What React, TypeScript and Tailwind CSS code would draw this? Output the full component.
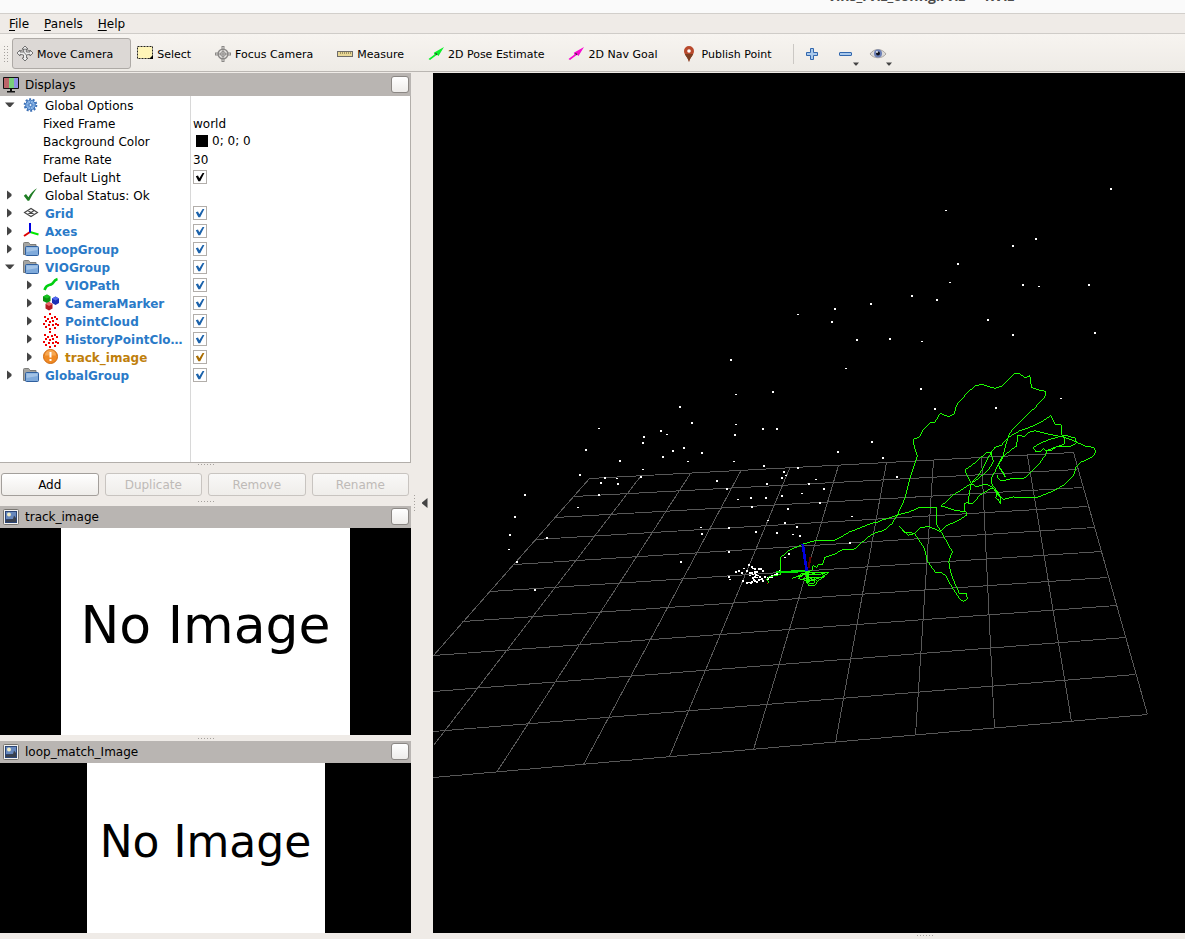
import { useState, type ReactNode } from 'react';

type IconName =
  | 'options' | 'ok' | 'grid' | 'axes' | 'folder' | 'path' | 'marker' | 'cloud' | 'warning';

interface TreeItem {
  id: string;
  label: string;
  icon?: IconName;
  child?: boolean;
  open?: boolean;
  tone?: 'plain' | 'display' | 'warning';
  value?: string;
  color?: boolean;
  check?: boolean;
}

const items: TreeItem[] = [
  { id: 'options', label: 'Global Options', icon: 'options', open: true },
  { id: 'frame', label: 'Fixed Frame', value: 'world' },
  { id: 'background', label: 'Background Color', value: '0; 0; 0', color: true },
  { id: 'rate', label: 'Frame Rate', value: '30' },
  { id: 'light', label: 'Default Light', check: true },
  { id: 'status', label: 'Global Status: Ok', icon: 'ok' },
  { id: 'grid', label: 'Grid', icon: 'grid', tone: 'display', check: true },
  { id: 'axes', label: 'Axes', icon: 'axes', tone: 'display', check: true },
  { id: 'loop', label: 'LoopGroup', icon: 'folder', tone: 'display', check: true },
  { id: 'vio', label: 'VIOGroup', icon: 'folder', open: true, tone: 'display', check: true },
  { id: 'viopath', label: 'VIOPath', icon: 'path', child: true, tone: 'display', check: true },
  { id: 'marker', label: 'CameraMarker', icon: 'marker', child: true, tone: 'display', check: true },
  { id: 'cloud', label: 'PointCloud', icon: 'cloud', child: true, tone: 'display', check: true },
  { id: 'history', label: 'HistoryPointClo…', icon: 'cloud', child: true, tone: 'display', check: true },
  { id: 'track', label: 'track_image', icon: 'warning', child: true, tone: 'warning', check: true },
  { id: 'global', label: 'GlobalGroup', icon: 'folder', tone: 'display', check: true },
];

const toneClass = {
  plain: 'text-black',
  display: 'font-bold text-[#2a7ac8]',
  warning: 'font-bold text-[#c07f0c]',
};

const checkColor = { plain: '#000000', display: '#1b62ab', warning: '#a86c00' };

function Icon({ children }: { children: ReactNode }) {
  return (
    <svg viewBox="0 0 16 16" className="w-4 h-4 shrink-0 overflow-visible" aria-hidden="true">
      {children}
    </svg>
  );
}

const cloudDots = [
  [6, 0], [1, 3], [11, 3], [4, 5], [8, 4], [13, 5], [2, 7], [6, 8], [9, 7],
  [0, 10], [12, 10], [5, 11], [9, 11], [2, 13], [14, 11], [6, 15], [11, 14],
];

function TreeIcon({ name }: { name: IconName }) {
  switch (name) {
    case 'options':
      return (
        <Icon>
          <circle cx="7.5" cy="8" r="5.8" fill="none" stroke="#3b6fb5" strokeWidth="2" strokeDasharray="2 1.6" />
          <circle cx="7.5" cy="8" r="4.8" fill="#8fb8e8" stroke="#3f76bd" />
          <path d="M7.5 4v8M3.5 8h8M4.7 5.2l5.6 5.6M10.3 5.2l-5.6 5.6" stroke="#4a80c4" strokeWidth=".7" />
          <circle cx="7.5" cy="8" r="1.6" fill="#e4effb" stroke="#3f76bd" />
        </Icon>
      );
    case 'ok':
      return (
        <Icon>
          <path d="M.8 8.8 3 7 5.4 10.2C7.5 6.5 10.2 3.4 14 1.2 10.8 5 8.4 9 6.2 13.8H4.6Z" fill="#1f7d24" />
        </Icon>
      );
    case 'grid':
      return (
        <Icon>
          <path d="M1.5 7.5 8 3.5 14.5 7.5 8 11.5ZM4.7 5.5 11.2 9.5M11.2 5.5 4.7 9.5" fill="none" stroke="#444" strokeWidth="1.1" />
        </Icon>
      );
    case 'axes':
      return (
        <Icon>
          <path d="M7 9 1 13" stroke="#e00000" strokeWidth="2" />
          <path d="M7 9 15.5 11.5" stroke="#00e800" strokeWidth="2" />
          <path d="M7 9.5V0" stroke="#0000e0" strokeWidth="2" />
        </Icon>
      );
    case 'folder':
      return (
        <Icon>
          <path d="M.5 13.5V2.5Q.5 1.5 1.5 1.5H5.5Q6 1.5 6.5 2.5L7 3.5H13V13.5Z" fill="#a5a5a2" stroke="#7d7d7a" />
          <rect x="2.5" y="5.5" width="13" height="9" rx="1" fill="#7faadb" stroke="#2f5f9e" />
          <path d="M3.5 6.5H14.5V9L3.5 11Z" fill="#a3c3e6" />
        </Icon>
      );
    case 'path':
      return (
        <Icon>
          <path d="M1.5 13C4 6 6 9.5 9.5 6.5 11.5 3.5 12.5 2.5 14.5 2" fill="none" stroke="#00cf10" strokeWidth="2.6" />
        </Icon>
      );
    case 'marker':
      return (
        <Icon>
          <path d="M0 1.5 4 -.5 7.5 1.5V6L4 8 0 6Z" fill="#0c9312" />
          <path d="M0 1.5 4 -.5 7.5 1.5 4 3.5Z" fill="#18c520" />
          <path d="M9 3.5 12.5 1.5 16 3.5V8L12.5 10 9 8Z" fill="#1c2fb4" />
          <path d="M9 3.5 12.5 1.5 16 3.5 12.5 5.5Z" fill="#5068ee" />
          <path d="M2.5 9 6 7 9.5 9V13.5L6 15.5 2.5 13.5Z" fill="#b41c22" />
          <path d="M2.5 9 6 7 9.5 9 6 11Z" fill="#ec686c" />
        </Icon>
      );
    case 'cloud':
      return (
        <Icon>
          {cloudDots.map(([x, y]) => (
            <rect key={`${x}-${y}`} x={x} y={y} width="2" height="2" fill="#f00000" />
          ))}
        </Icon>
      );
    case 'warning':
      return (
        <Icon>
          <circle cx="7.5" cy="7.5" r="7" fill="#f08a24" stroke="#cf6a10" />
          <path d="M2 6.5A5.5 5.5 0 0 1 13 6.5Z" fill="#f7a853" />
          <path d="M7.5 3V8.5M7.5 10V12" stroke="#fff" strokeWidth="2" />
        </Icon>
      );
  }
}

function Arrow({ open }: { open?: boolean }) {
  return (
    <svg viewBox="0 0 10 10" className="w-[10px] h-[10px] ml-[5px] mr-[5px] mb-px shrink-0" aria-hidden="true">
      <path d={open ? 'M0 2.5H9.5L5.5 7H4Z' : 'M2 .5 6.5 4V6L2 9.5Z'} fill="#444" />
    </svg>
  );
}

function CheckBox({ label, tone, defaultChecked }: { label: string; tone: 'plain' | 'display' | 'warning'; defaultChecked: boolean }) {
  const [checked, setChecked] = useState(defaultChecked);
  return (
    <span className="grid w-[14px] h-[14px]">
      <input
        type="checkbox"
        aria-label={label}
        checked={checked}
        onChange={(e) => setChecked(e.target.checked)}
        className="col-start-1 row-start-1 w-[14px] h-[14px] appearance-none border border-[#b2aeaa] bg-white"
      />
      {checked && (
        <svg viewBox="0 0 14 14" className="col-start-1 row-start-1 pointer-events-none" aria-hidden="true">
          <path d="M2.8 6.2 5 5.6 6.3 8.3 9.6 3H11.4L7.2 11.3H5.4Z" fill={checkColor[tone]} />
        </svg>
      )}
    </span>
  );
}

function TreeRow({ item }: { item: TreeItem }) {
  const tone = item.tone ?? 'plain';
  return (
    <div role="treeitem" aria-expanded={item.open} className="grid grid-cols-[191px_1fr] h-[18px]">
      <div className={`flex items-center border-r border-[#d8d8d8] overflow-hidden ${item.child ? 'pl-5' : ''}`}>
        {item.icon ? (
          <>
            <Arrow open={item.open} />
            <span className="flex pl-[3px] pr-[6px]">
              <TreeIcon name={item.icon} />
            </span>
          </>
        ) : (
          <span className="w-[43px]" />
        )}
        <span className={`whitespace-nowrap pt-[2px] leading-4 ${toneClass[tone]}`}>{item.label}</span>
      </div>
      <div className="flex items-center pl-[2px]">
        {item.color && <span className="w-3 h-3 ml-[3px] mr-1 bg-black" />}
        {item.value && <span className={item.color ? 'leading-4' : 'pt-[2px] leading-4'}>{item.value}</span>}
        {item.check !== undefined && <CheckBox label={item.label} tone={tone} defaultChecked={item.check} />}
      </div>
    </div>
  );
}

function Grip({ vertical }: { vertical?: boolean }) {
  return (
    <span className={`flex gap-[2px] ${vertical ? 'flex-col' : ''}`}>
      {[0, 1, 2, 3, 4, 5].map((i) => (
        <span key={i} className="w-px h-px bg-[#a5a19d]" />
      ))}
    </span>
  );
}

function PanelHeader({ title, icon, tall }: { title: string; icon: ReactNode; tall?: boolean }) {
  return (
    <div className={`flex items-center shrink-0 pl-[3px] pr-[2px] bg-[#b9b5b2] ${tall ? 'h-[23px]' : 'h-[22px]'}`}>
      {icon}
      <h2 className="ml-[6px] flex-1">{title}</h2>
      <button
        type="button"
        aria-label={`Close ${title}`}
        className="w-[18px] h-[17px] mb-px rounded-[3px] border border-[#8b8784] bg-linear-to-b from-white to-[#eeecea]"
      />
    </div>
  );
}

const monitorIcon = (
  <Icon>
    <rect x="0" y="0" width="16" height="12" rx="1" fill="#111" />
    <rect x="1" y="1" width="5" height="10" fill="#bb6468" />
    <rect x="6" y="1" width="5" height="10" fill="#79cf7c" />
    <rect x="11" y="1" width="4" height="10" fill="#8f8fe4" />
    <path d="M7 12H9V14H12V15.5H4V14H7Z" fill="#111" />
  </Icon>
);

const imageIcon = (
  <Icon>
    <rect x=".5" y=".5" width="15" height="15" rx="1" fill="#f4f4f2" stroke="#77746f" />
    <rect x="2" y="2" width="12" height="12" fill="#2c4677" />
    <rect x="3" y="3" width="10" height="7" fill="#6788bd" />
    <circle cx="6" cy="5.5" r="2" fill="#f0edc6" />
    <path d="M3 11 10 10 11 6.5 13 9V13H3Z" fill="#39404d" />
  </Icon>
);

function ImagePanel({ title, className, textClass }: { title: string; className: string; textClass: string }) {
  return (
    <section className={`flex flex-col min-h-0 ${className}`}>
      <PanelHeader title={title} icon={imageIcon} />
      <div className="flex-1 min-h-0 flex justify-center bg-black">
        <div className={`h-full aspect-[7/5] flex items-center justify-center bg-white whitespace-nowrap leading-none ${textClass}`}>
          No Image
        </div>
      </div>
    </section>
  );
}

const gridLines = [
  // across
  [589, 478, 1073, 452], [573, 496, 1077, 469], [555, 517, 1082, 487], [535, 539, 1087, 506],
  [514, 564, 1094, 527], [490, 591, 1101, 551], [462, 621, 1107, 577], [433, 655, 1116, 605],
  [433, 691, 1125, 637], [433, 731, 1135, 674], [433, 777, 1147, 714],
  // depth
  [589, 478, 433, 655], [640, 476, 433, 745], [690, 473, 496, 772], [740, 471, 583, 764],
  [789, 468, 669, 756], [838, 465, 753, 749], [886, 462, 835, 742], [933, 460, 915, 735],
  [981, 457, 994, 728], [1027, 455, 1071, 721], [1073, 452, 1147, 714],
];

const points = [
  [1111, 189], [946, 211], [1036, 239], [1013, 246], [958, 264], [950, 283], [912, 296], [937, 300],
  [1023, 285], [1039, 287], [1089, 285], [871, 304], [835, 309], [798, 315], [832, 322], [857, 340],
  [890, 339], [922, 342], [988, 320], [1013, 335], [1095, 333], [846, 369], [921, 389], [935, 409],
  [996, 408], [1061, 399], [883, 458], [897, 477], [731, 360], [736, 395], [773, 392], [680, 407],
  [692, 423], [599, 429], [644, 437], [643, 443], [661, 431], [667, 435], [673, 451], [684, 448],
  [663, 457], [688, 462], [702, 453], [586, 450], [620, 461], [643, 470], [641, 477], [580, 475],
  [605, 478], [617, 479], [618, 484], [601, 483], [599, 495], [578, 508], [525, 495], [515, 517],
  [510, 535], [509, 550], [517, 562], [535, 590], [547, 538], [736, 425], [735, 435], [763, 429],
  [777, 429], [734, 462], [764, 466], [798, 468], [784, 472], [786, 476], [782, 478], [767, 484],
  [809, 484], [816, 480], [824, 489], [717, 481], [727, 489], [738, 500], [751, 498], [766, 498],
  [782, 496], [802, 494], [752, 507], [788, 509], [820, 503], [768, 521], [785, 523], [797, 527],
  [777, 533], [793, 535], [800, 536], [756, 532], [729, 528], [701, 528], [702, 534], [729, 552],
  [681, 562], [852, 517], [850, 543], [838, 452], [872, 442], [785, 558], [789, 554],
  [749, 565], [752, 567], [744, 569], [736, 572], [739, 571], [729, 577], [730, 580], [742, 573],
  [747, 571], [750, 573], [753, 569], [755, 569], [757, 572], [759, 569], [755, 572], [761, 569],
  [763, 571], [755, 573], [753, 575], [755, 577], [743, 581], [747, 583], [749, 583], [751, 583],
  [752, 582], [755, 581], [757, 578], [759, 580], [762, 579], [763, 581], [761, 580], [765, 577],
  [768, 578], [770, 577], [772, 576], [775, 575], [777, 574], [780, 571], [772, 578], [768, 579],
  [757, 582], [752, 573], [750, 576], [756, 575], [754, 580], [760, 577], [758, 576], [753, 578],
];

// trajectory strokes, in thirds of a scene unit
const loopStrokes = [
  'M0 515 16 508 36 491 52 465 75 415 90 355 112 288 108 275 103 262 100 238 118 232 128 212 150 188 163 188 181 160 205 170 222 162 230 135 262 98 285 78 304 73 345 85 365 78 403 40 418 40 436 54 449 46 455 83 476 90 498 94 498 106 465 143 425 180 390 218 380 245 370 285 355 313 345 335 335 352 335 372 352 394 362 412 361 432 355 418 347 415 352 394',
  'M0 482 22 476 50 466 90 455 118 442 150 444 169 442 169 492 182 513 200 545 217 575 206 605 212 637 225 672 238 700 258 700 263 716 252 724 240 718 215 680 198 648 185 639 166 637 142 603 133 565 105 522 92 518 75 516 58 499 70 513 85 526 102 521 120 504 145 499 182 515 200 496 222 488 240 478 261 465 258 455 230 452 184 438 220 405 272 372 300 352 325 330 340 305 333 278 318 278 290 305 258 328 258 340 275 372 290 380 315 372 335 380 357 400',
  'M333 278 316 310 300 340 274 370 268 400 265 428 254 430 253 455',
  'M265 430 280 430 300 405 335 384 350 392 358 410',
  'M333 278 345 262 365 255 385 232 420 212 460 198 490 182 512 167 525 192 543 195 546 225 553 230 553 253 530 260 500 272',
  'M377 350 362 330 355 315 370 290 395 268 410 258 413 225 432 230 447 217 465 212 500 221 545 230 575 240 615 258 643 263 647 278 635 292 600 308 588 322 580 348 553 375 515 395 475 411 430 413 400 411 370 418 355 405 340 385',
  'M355 315 368 335 375 350M353 345 353 355 365 363 400 355 432 355 450 340 480 308 500 280 500 270 515 271 530 260 575 258 590 248 585 234 555 226 520 235 485 247 460 263 468 276 480 276 490 265 500 275',
];

const startStrokes = [
  'M1200 545 1175 550 1130 568 1110 575 1085 590 1065 600 1005 602 970 612 925 632 903 652 903 690 900 704 880 708 868 710 860 718 868 730',
  'M1200 574 1175 583 1145 608 1120 630 1085 630 1065 642 1035 652 1028 672 1015 675 1010 682 1000 676 996 690 985 695',
];

const originStrokes = [
  'M275 145 300 138 318 128 360 128 387 127 370 140 345 148 320 152 295 146 310 134 335 133 365 132 375 138 350 156 346 166 325 168 322 150 340 142 350 152',
  'M290 141 305 131 330 127 350 134 368 131 380 128M300 149 330 143 372 142M330 150 345 152 340 162 326 160Z',
];

function Viewport() {
  return (
    <svg
      viewBox="433 73 752 860"
      preserveAspectRatio="xMidYMid slice"
      className="flex-1 min-h-0 w-full bg-black"
      shapeRendering="crispEdges"
      role="img"
      aria-label="3D view"
    >
      <g stroke="#585858">
        {gridLines.map(([x1, y1, x2, y2], i) => (
          <line key={i} x1={x1 + 0.5} y1={y1 + 0.5} x2={x2 + 0.5} y2={y2 + 0.5} />
        ))}
      </g>
      <g fill="#fff">
        {points.map(([x, y], i) => (
          <rect key={i} x={x - 1} y={y - 1} width="2" height={i % 4 === 1 ? 1 : 2} />
        ))}
      </g>
      <g fill="none" stroke="#1cff00" strokeWidth="3">
        <g transform="translate(880 360) scale(.33333)">
          {loopStrokes.map((d) => <path key={d} d={d} />)}
        </g>
        <g transform="translate(480 340) scale(.33333)">
          {startStrokes.map((d) => <path key={d} d={d} />)}
        </g>
        <g transform="translate(700 530) scale(.33333)">
          {originStrokes.map((d) => <path key={d} d={d} />)}
          <path d="M332 80 325 115" stroke="#600000" strokeWidth="6" />
          <path d="M228 127 318 123" stroke="#00e400" strokeWidth="7" />
          <path d="M323 122V158" strokeWidth="8" />
          <path d="M308 42 320 122" stroke="#0000e0" strokeWidth="8" />
          <path d="M201 160H205" stroke="#d00000" />
        </g>
      </g>
    </svg>
  );
}

const poseArrow = (color: string) => (
  <Icon>
    <path d="M.5 13 6.5 8.5 5.8 6.8 16 1 10.5 10 9 8.8 2 14Z" fill={color} />
    <path d="M7.5 7.2 9 8.8" stroke="#333" strokeWidth="1.2" />
  </Icon>
);

const tools = [
  {
    name: 'Move Camera',
    icon: (
      <Icon>
        <path d="M8 0 11 3H9.3V6L13 6V4L16 7 13 10V8.3L9.5 9V12H11L8 15 5 12H6.5V9L3 8.3V10L0 7 3 4V6L6.7 6V3H5Z" fill="#eee" stroke="#666" strokeWidth=".9" />
        <path d="M3 5 8 3 13 5M6.8 6 9.3 9" fill="none" stroke="#666" strokeWidth=".8" />
      </Icon>
    ),
  },
  {
    name: 'Select',
    icon: (
      <Icon>
        <rect x=".5" y=".5" width="15" height="12" fill="#fff5b8" stroke="#222" strokeDasharray="2 1" />
        <path d="M16 9V13H12Z" fill="#000" />
      </Icon>
    ),
  },
  {
    name: 'Focus Camera',
    icon: (
      <Icon>
        <path d="M8 0V16M0 8H16" stroke="#8a8886" strokeWidth="3" />
        <path d="M8 1V15M1 8H15" stroke="#e8e6e3" />
        <circle cx="8" cy="8" r="4.8" fill="#e8e6e3" stroke="#8a8886" strokeWidth="1.6" />
        <circle cx="8" cy="8" r="2.4" fill="none" stroke="#8a8886" />
        <path d="M8 3V13M3 8H13" stroke="#8a8886" />
      </Icon>
    ),
  },
  {
    name: 'Measure',
    icon: (
      <Icon>
        <rect x=".5" y="5.5" width="15" height="5" fill="#e8d795" stroke="#6e6c68" />
        <path d="M3.5 6V8M5.5 6V8M7.5 6V8M9.5 6V8M11.5 6V8M13.5 6V8" stroke="#8d8255" strokeWidth=".8" />
      </Icon>
    ),
  },
  { name: '2D Pose Estimate', icon: poseArrow('#0df02a') },
  { name: '2D Nav Goal', icon: poseArrow('#f60bd0') },
  {
    name: 'Publish Point',
    icon: (
      <Icon>
        <path d="M8 16C7.2 11.5 3 9 3 5A5 5 0 0 1 13 5C13 9 8.8 11.5 8 16Z" fill="#b8492c" />
        <path d="M8 16C7.4 12.5 5 11 3.8 8H12.2C11 11 8.6 12.5 8 16Z" fill="#7c3f22" />
        <circle cx="8" cy="5" r="1.8" fill="#fff" />
      </Icon>
    ),
  },
];

const dropArrow = (
  <svg viewBox="0 0 6 4" className="w-[6px] h-[4px] mt-5" aria-hidden="true">
    <path d="M0 .5H6L3.5 3.5H2.5Z" fill="#444" />
  </svg>
);

function App() {
  const [tool, setTool] = useState('Move Camera');

  return (
    <div className="h-screen flex flex-col overflow-hidden bg-[#efebe7] font-['DejaVu_Sans','Liberation_Sans',sans-serif] text-[12px] leading-[14px] text-black">
      {/* Title bar */}
      <header className="h-[14px] shrink-0 flex items-end overflow-hidden border-b border-[#d2cfcb] bg-[#fafafa]">
        <h1 className="pl-[828px] mb-[9px] whitespace-nowrap font-['Open_Sans',sans-serif] text-[14px] leading-4 font-bold text-[#4c4c4c]">
          vins_rviz_config.rviz* - RViz
        </h1>
      </header>

      {/* Menu bar */}
      <nav className="h-5 shrink-0 flex items-center gap-[15px] pl-[9px] border-b border-[#cfccc8]">
        {['File', 'Panels', 'Help'].map((name) => (
          <button key={name} type="button">
            <span className="underline underline-offset-2">{name[0]}</span>
            {name.slice(1)}
          </button>
        ))}
      </nav>

      {/* Tools */}
      <div role="toolbar" className="h-[38px] shrink-0 flex items-center gap-px pt-[2px] text-[11px] border-b border-[#bab6b2] bg-linear-to-b from-[#f7f4f0] to-[#eeebe6]">
        <span className="flex gap-[2px] w-[11px] pl-1">
          <Grip vertical />
          <Grip vertical />
        </span>
        {tools.map(({ name, icon }) => (
          <button
            key={name}
            type="button"
            onClick={() => setTool(name)}
            className={`h-[31px] flex items-center gap-1 pl-1 pr-[17px] rounded-[3px] border whitespace-nowrap ${
              tool === name ? 'border-[#aeaaa6] bg-[#dcd8d5]' : 'border-transparent'
            }`}
          >
            {icon}
            <span className="pt-[2px]">{name}</span>
          </button>
        ))}
        <span className="w-px h-5 ml-[2px] bg-[#cbc8c4]" />
        <button type="button" aria-label="Add tool" className="ml-[9px] flex">
          <Icon>
            <path d="M6.5 2.5H9.5V6.5H13.5V9.5H9.5V13.5H6.5V9.5H2.5V6.5H6.5Z" fill="#a9c9ec" stroke="#3267ad" />
          </Icon>
        </button>
        <button type="button" aria-label="Remove tool" className="ml-4 flex items-center">
          <Icon>
            <rect x="2.5" y="6.5" width="12" height="3" rx=".5" fill="#a9c9ec" stroke="#3267ad" />
          </Icon>
          {dropArrow}
        </button>
        <button type="button" aria-label="View tools" className="ml-[10px] flex items-center">
          <Icon>
            <path d="M0 8C4 2 12 2 16 8 12 13 4 13 0 8Z" fill="#dddbd8" stroke="#aaa6a2" />
            <circle cx="8" cy="7.5" r="4" fill="#6b7fb5" />
            <circle cx="8" cy="7.5" r="2" fill="#10131e" />
            <circle cx="7" cy="6" r=".9" fill="#fff" />
          </Icon>
          {dropArrow}
        </button>
      </div>

      <main className="flex-1 min-h-0 flex pt-px">
        {/* Docked panels */}
        <div className="w-[411px] shrink-0 flex flex-col pb-[6px]">
          <PanelHeader title="Displays" icon={monitorIcon} tall />
          <div role="tree" aria-label="Displays" className="flex-[366_0_0] min-h-0 flex flex-col border-r border-b border-[#b2aeaa] bg-white overflow-hidden">
            {items.map((item) => (
              <TreeRow key={item.id} item={item} />
            ))}
            <div className="flex-1 grid grid-cols-[191px_1fr]">
              <div className="border-r border-[#d8d8d8]" />
            </div>
          </div>
          <div className="h-[10px] shrink-0 flex justify-center pt-px">
            <Grip />
          </div>
          <div className="h-[23px] shrink-0 grid grid-cols-4 gap-[6px] pl-px pr-[2px]">
            {['Add', 'Duplicate', 'Remove', 'Rename'].map((name) => (
              <button
                key={name}
                type="button"
                disabled={name !== 'Add'}
                className="rounded-[3px] border border-[#a39f9b] bg-linear-to-b from-white to-[#efedea] disabled:border-[#c8c4c0] disabled:from-[#f9f8f7] disabled:text-[#bebab7]"
              >
                {name}
              </button>
            ))}
          </div>
          <div className="h-[10px] shrink-0 flex items-center justify-center">
            <Grip />
          </div>
          <ImagePanel title="track_image" className="flex-[229_0_0]" textClass="text-[52px] pb-[14px]" />
          <div className="h-[6px] shrink-0 flex items-center justify-center">
            <Grip />
          </div>
          <ImagePanel title="loop_match_Image" className="flex-[192_0_0]" textClass="text-[44px] pb-[12px]" />
        </div>

        {/* Splitter */}
        <div className="w-[22px] shrink-0 flex items-center pl-[3px] pb-[7px] gap-[7px]">
          <Grip vertical />
          <button type="button" aria-label="Hide panels" className="flex">
            <svg viewBox="0 0 6 10" className="w-[6px] h-[10px]" aria-hidden="true">
              <path d="M5.5 0V10L0 5.5V4.5Z" fill="#444" />
            </svg>
          </button>
        </div>

        <div className="flex-1 min-w-0 flex flex-col">
          <Viewport />
          <div className="h-[6px] shrink-0 flex items-start justify-end pt-[2px] pr-[252px]">
            <Grip />
          </div>
        </div>
      </main>
    </div>
  );
}

export default App;
